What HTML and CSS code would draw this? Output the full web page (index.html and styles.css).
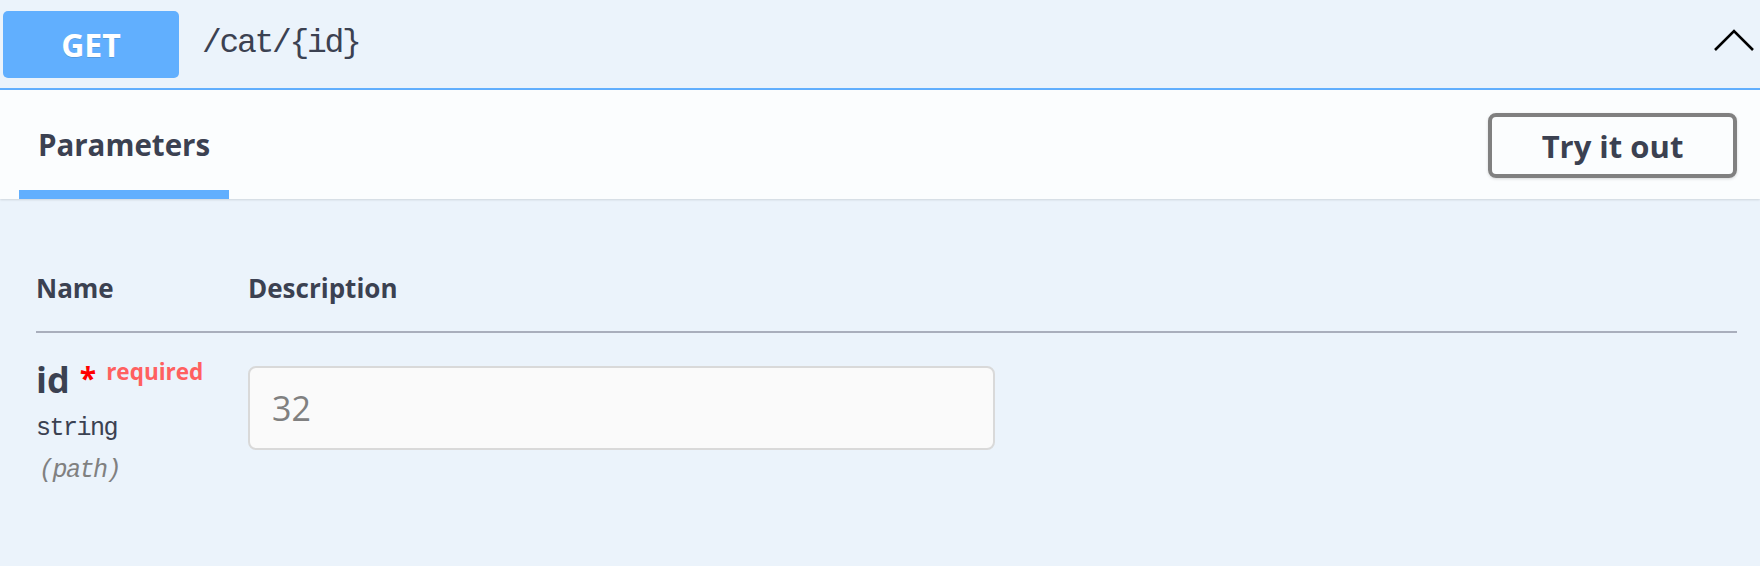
FILE: index.html
```html
<!DOCTYPE html>
<html lang="en">
<head>
<meta charset="utf-8">
<title>GET /cat/{id}</title>
<link rel="stylesheet" href="styles.css">
</head>
<body>
<div class="opblock">
  <div class="summary">
    <span class="method">GET</span>
    <span class="path">/cat/{id}</span>
    <svg class="chevron" width="42" height="24" viewBox="0 0 42 24" aria-hidden="true">
      <polyline points="2,21 21,2 40,21" fill="none" stroke="#000" stroke-width="2.6"/>
    </svg>
  </div>
  <div class="section-header">
    <div class="tab"><h4 class="tab-title">Parameters</h4></div>
    <button class="try-btn">Try it out</button>
  </div>
  <div class="params">
    <div class="thead">
      <div class="col-name">Name</div>
      <div class="col-desc">Description</div>
    </div>
    <div class="row">
      <div class="col-name">
        <div class="pname">id<span class="star">*</span><span class="required">required</span></div>
        <div class="ptype">string</div>
        <div class="pin">(path)</div>
      </div>
      <div class="col-desc">
        <input class="value" type="text" placeholder="32">
      </div>
    </div>
  </div>
</div>
</body>
</html>
```
FILE: styles.css
```css
html, body {
  margin: 0;
  padding: 0;
}
body {
  background: #ebf3fb;
  font-family: "Open Sans", "Noto Sans CJK SC", sans-serif;
  color: #3b4151;
  width: 1760px;
  height: 566px;
  overflow: hidden;
}
.summary {
  display: flex;
  align-items: center;
  height: 88px;
  padding: 0 5px 0 3px;
  border-bottom: 2px solid #61affe;
}
.method {
  width: 176px;
  height: 67px;
  border-radius: 5px;
  background: #61affe;
  color: #fff;
  font-weight: 700;
  font-size: 32px;
  display: flex;
  align-items: center;
  justify-content: center;
  text-shadow: 0 1px 0 rgba(0,0,0,.12);
}
.path {
  margin-left: 23px;
  font-family: "Liberation Mono", monospace;
  font-size: 33px;
  letter-spacing: -2.3px;
  color: #3b4151;
  padding-bottom: 2px;
}
.chevron {
  margin-left: auto;
  margin-top: -6px;
}
.section-header {
  display: flex;
  align-items: center;
  justify-content: space-between;
  height: 109px;
  padding: 0 23px 0 19px;
  background: rgba(255,255,255,.8);
  box-shadow: 0 1px 2px rgba(0,0,0,.12);
  position: relative;
}
.tab {
  align-self: stretch;
  display: flex;
  align-items: center;
  width: 210px;
  justify-content: center;
  border-bottom: 9px solid #61affe;
  box-sizing: border-box;
  padding-top: 9px;
}
.tab-title {
  margin: 0;
  font-size: 29.5px;
  font-weight: 700;
  color: #3b4151;
}
.try-btn {
  width: 249px;
  height: 65px;
  margin-top: 2px;
  border: 4px solid #808080;
  border-radius: 8px;
  background: transparent;
  box-shadow: 0 1px 3px rgba(0,0,0,.15);
  font-family: "Open Sans", sans-serif;
  font-size: 31px;
  font-weight: 700;
  color: #3b4151;
  padding: 0;
}
.params {
  padding: 0 23px 0 36px;
}
.thead {
  display: flex;
  padding-top: 71px;
  height: 61px;
  border-bottom: 2px solid #a9aebc;
  font-size: 26px;
  font-weight: 700;
  box-sizing: content-box;
  line-height: 36px;
}
.col-name {
  width: 212px;
  flex: none;
}
.col-desc {
  flex: 1;
}
.row {
  display: flex;
  padding-top: 24px;
}
.pname {
  font-size: 36px;
  font-weight: 700;
  line-height: 46px;
}
.star {
  color: red;
  font-size: 30px;
  margin-left: 10px;
  position: relative;
  top: -4px;
}
.required {
  font-size: 22.5px;
  color: #ff6060;
  margin-left: 10px;
  position: relative;
  top: -13px;
}
.ptype, .pin {
  font-family: "Liberation Mono", monospace;
  font-size: 25px;
  letter-spacing: -1.5px;
  line-height: 42px;
}
.pin {
  font-style: italic;
  color: #808080;
  padding-left: 3px;
}
.value {
  display: block;
  box-sizing: border-box;
  width: 747px;
  height: 84px;
  margin-top: 9px;
  border: 2px solid #d9d9d9;
  border-radius: 8px;
  background: #fafafa;
  padding: 0 22px;
  font-family: "Open Sans", sans-serif;
  font-size: 34px;
  color: #3b4151;
  outline: none;
}
.value::placeholder {
  color: #808080;
}
```
